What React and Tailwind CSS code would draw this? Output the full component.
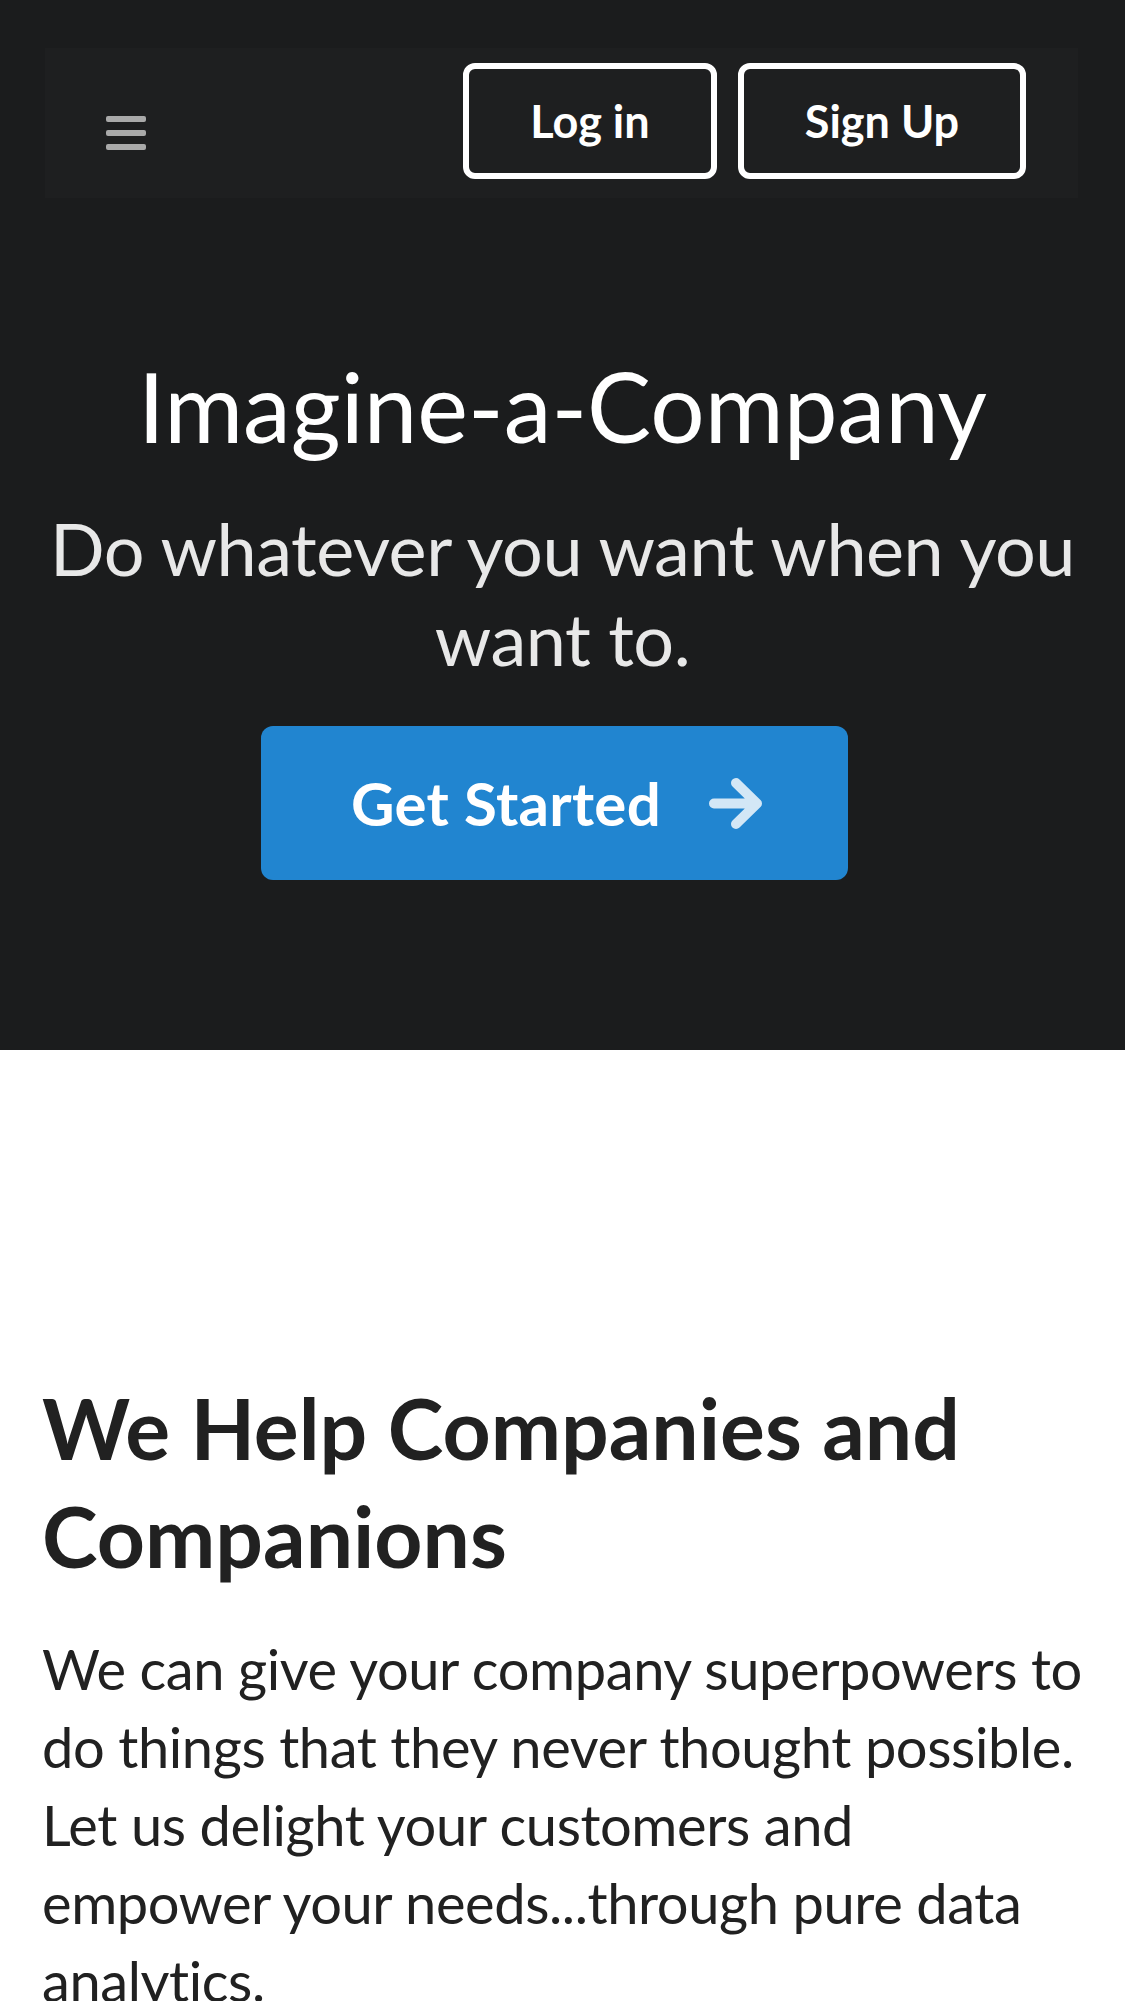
import React from 'react';

function MenuIcon() {
  return (
    <div className="flex flex-col gap-[8px] w-[40px]">
      <span className="block h-[6px] rounded-[2px] bg-[#a9a9a9]" />
      <span className="block h-[6px] rounded-[2px] bg-[#a9a9a9]" />
      <span className="block h-[6px] rounded-[2px] bg-[#a9a9a9]" />
    </div>
  );
}

function ArrowIcon() {
  return (
    <svg width="53" height="51" viewBox="0 0 53 51" fill="none">
      <path
        d="M5 25.5H48M27 5L48 25.5L27 46"
        stroke="#d3e7f6"
        strokeWidth="10"
        strokeLinecap="round"
        strokeLinejoin="round"
      />
    </svg>
  );
}

export default function App() {
  return (
    <div className="w-[1125px] min-h-[2001px] bg-white font-['Lato','Liberation_Sans',sans-serif]">
      {/* Masthead */}
      <section className="bg-[#1b1c1d] min-h-[1050px] pt-[48px]">
        <div className="ml-[45px] mr-[47px] h-[150px] bg-[#1e1f20] flex items-center">
          <div className="ml-[61px] mt-[20px]">
            <MenuIcon />
          </div>
          <div className="ml-auto mr-[52px] mb-[4px] flex gap-[21px]">
            <button className="w-[254px] h-[116px] rounded-[12px] border-[6px] border-white text-white font-bold text-[45px] leading-none">
              Log in
            </button>
            <button className="w-[288px] h-[116px] rounded-[12px] border-[6px] border-white text-white font-bold text-[45px] leading-none">
              Sign Up
            </button>
          </div>
        </div>

        <div className="flex flex-col items-center text-center pt-[146px]">
          <h1 className="text-[96px] leading-[123px] font-normal text-white">Imagine-a-Company</h1>
          <h2 className="mt-[36px] text-[72px] leading-[90px] font-normal tracking-[-0.5px] text-[#e8e8e8] px-[40px]">
            Do whatever you want when you want to.
          </h2>
          <button className="mt-[43px] ml-[-17px] w-[587px] h-[154px] rounded-[12px] bg-[#2185d0] flex items-center justify-center gap-[48px] pl-[5px]">
            <span className="text-white font-bold text-[60px] leading-none tracking-[0.3px]">Get Started</span>
            <ArrowIcon />
          </button>
        </div>
      </section>

      {/* Stripe */}
      <section className="pt-[324px] pl-[42px] pr-[34px] text-[#212121]">
        <h3 className="text-[84px] leading-[108px] font-bold pr-[40px]">We Help Companies and Companions</h3>
        <p className="mt-[40px] text-[56px] leading-[78px] tracking-[-0.4px]">
          We can give your company superpowers to do things that they never thought possible. Let us
          delight your customers and empower your needs...through pure data analytics.
        </p>
      </section>
    </div>
  );
}
